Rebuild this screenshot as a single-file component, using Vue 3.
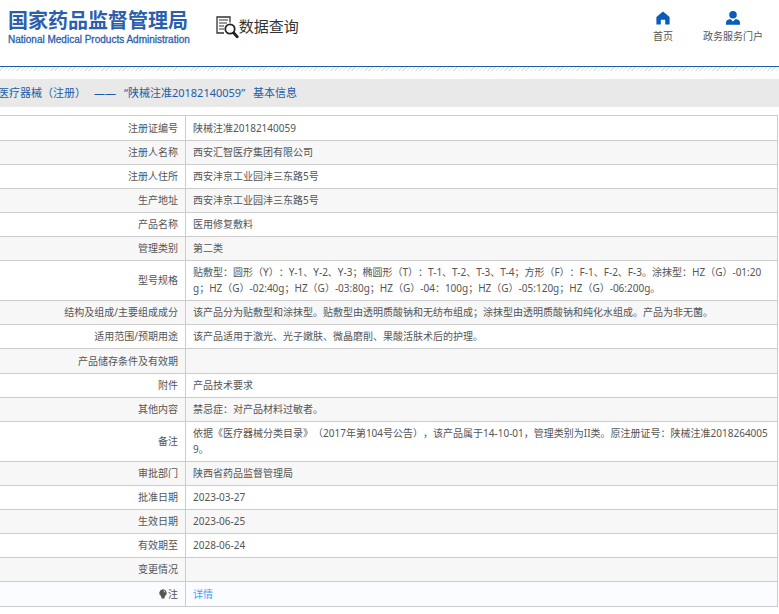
<script setup>
const rows = [
  { label: '注册证编号', value: '陕械注准20182140059', tall: true },
  { label: '注册人名称', value: '西安汇智医疗集团有限公司' },
  { label: '注册人住所', value: '西安沣京工业园沣三东路5号' },
  { label: '生产地址', value: '西安沣京工业园沣三东路5号' },
  { label: '产品名称', value: '医用修复敷料' },
  { label: '管理类别', value: '第二类' },
  { label: '型号规格', value: '贴敷型：圆形（Y）：Y-1、Y-2、Y-3；椭圆形（T）：T-1、T-2、T-3、T-4；方形（F）：F-1、F-2、F-3。涂抹型：HZ（G）-01:20g；HZ（G）-02:40g；HZ（G）-03:80g；HZ（G）-04：100g；HZ（G）-05:120g；HZ（G）-06:200g。' },
  { label: '结构及组成/主要组成成分', value: '该产品分为贴敷型和涂抹型。贴敷型由透明质酸钠和无纺布组成；涂抹型由透明质酸钠和纯化水组成。产品为非无菌。' },
  { label: '适用范围/预期用途', value: '该产品适用于激光、光子嫩肤、微晶磨削、果酸活肤术后的护理。' },
  { label: '产品储存条件及有效期', value: '', tall: true },
  { label: '附件', value: '产品技术要求' },
  { label: '其他内容', value: '禁忌症：对产品材料过敏者。' },
  { label: '备注', value: '依据《医疗器械分类目录》（2017年第104号公告），该产品属于14-10-01，管理类别为II类。原注册证号：陕械注准20182640059。' },
  { label: '审批部门', value: '陕西省药品监督管理局' },
  { label: '批准日期', value: '2023-03-27' },
  { label: '生效日期', value: '2023-06-25' },
  { label: '有效期至', value: '2028-06-24' },
  { label: '变更情况', value: '' },
]
</script>

<template>
  <div class="page">
    <header class="header">
      <a class="logo" href="#">
        <span class="logo-cn">国家药品监督管理局</span>
        <span class="logo-en">National Medical Products Administration</span>
      </a>
      <a class="query" href="#">
        <svg class="query-icon" viewBox="0 0 23 23" aria-hidden="true">
          <path d="M14 6.5V1H1v16h7" fill="none" stroke="#333" stroke-width="1.3" />
          <path d="M3 4h9M3 7h8M3 10h5M3 13h5" fill="none" stroke="#333" stroke-width="1.2" />
          <circle cx="14" cy="13" r="4.7" fill="#fff" stroke="#222" stroke-width="1.8" />
          <path d="M17.8 17l3.4 3.8" stroke="#222" stroke-width="2.8" stroke-linecap="round" />
        </svg>
        <span>数据查询</span>
      </a>
      <nav class="nav">
        <a class="nav-item" href="#">
          <svg class="nav-icon" viewBox="0 0 14 14" aria-hidden="true">
            <path d="M7 .4L.4 6V13.4H4.8V8.8h4.4v4.6h4.4V6z" fill="#0b5cb8" />
          </svg>
          <span>首页</span>
        </a>
        <a class="nav-item" href="#">
          <svg class="nav-icon" viewBox="0 0 14 14" aria-hidden="true">
            <circle cx="7" cy="3.8" r="3.8" fill="#0b5cb8" />
            <path d="M0 13.8V11.5Q.5 8.6 4.4 8.1L7 10.6 9.6 8.1Q13.5 8.6 14 11.5v2.3z" fill="#0b5cb8" />
          </svg>
          <span>政务服务门户</span>
        </a>
      </nav>
    </header>
    <div class="stripes"></div>

    <main>
      <h1 class="title">
        <span>医疗器械（注册）</span>
        <span>——</span>
        <span>“陕械注准20182140059”</span>
        <span>基本信息</span>
      </h1>
      <table class="info">
        <tbody>
          <tr v-for="row in rows" :key="row.label" :class="{ tall: row.tall }">
            <th scope="row">{{ row.label }}</th>
            <td>{{ row.value }}</td>
          </tr>
          <tr class="note tall">
            <th scope="row">
              <svg class="bulb" viewBox="0 0 8 10" aria-hidden="true">
                <path d="M4 .3a3.7 3.7 0 0 1 2 6.8L5.4 9.6H2.6L2 7.1A3.7 3.7 0 0 1 4 .3z" fill="#555" />
                <path d="M4.5 1.8q1.2.2 1.4 1.5" fill="none" stroke="#fff" stroke-width=".8" />
              </svg><span>注</span>
            </th>
            <td><a href="#">详情</a></td>
          </tr>
        </tbody>
      </table>
    </main>
  </div>
</template>

<style>
body {
  margin: 0;
  background: #fff;
}
</style>

<style scoped>
.page {
  overflow: hidden;
  font-family: "Noto Sans", "Noto Sans CJK SC", sans-serif;
  font-size: 10px;
  line-height: 16px;
  color: #555;
  text-spacing-trim: space-all;
}
a {
  color: inherit;
  text-decoration: none;
}
.header {
  display: flex;
  align-items: flex-start;
  height: 67px;
  padding: 0 16px 0 8px;
  border-bottom: 1px solid #1c5ca8;
  box-sizing: border-box;
}
.logo {
  display: flex;
  flex-direction: column;
  padding-top: 8px;
  color: #2b5fae;
  white-space: nowrap;
}
.logo-cn {
  font-family: "Noto Sans CJK SC", sans-serif;
  font-size: 20px;
  font-weight: 700;
  line-height: 24px;
}
.logo-en {
  font-family: "Liberation Sans", sans-serif;
  font-size: 10px;
  -webkit-text-stroke: 0.3px currentColor;
}
.query {
  display: flex;
  align-items: center;
  padding-top: 12px;
  margin-left: 26px;
  font-size: 15px;
  line-height: 24px;
  color: #333;
}
.query-icon {
  width: 23px;
  height: 23px;
  margin-top: 4px;
}
.nav {
  display: flex;
  gap: 30px;
  margin-left: auto;
  padding-top: 11px;
}
.nav-item {
  display: flex;
  flex-direction: column;
  align-items: center;
  gap: 3px;
}
.nav-icon {
  width: 14px;
  height: 14px;
}
.stripes {
  height: 4px;
  background: repeating-linear-gradient(135deg, #fff 0 2px, #dfe6ec 2px 3px);
}
.title {
  display: flex;
  gap: 10px;
  margin: 8px 0;
  text-indent: -2px;
  background: #e9e9e9;
  color: #1c5ca8;
  font-size: 11px;
  font-weight: 400;
  line-height: 28px;
  white-space: nowrap;
}
.info {
  width: calc(100% - 1px);
  border-collapse: collapse;
}
.info th,
.info td {
  padding: 3px 7px 4px;
  border: 1px solid #ccc;
  font-weight: 400;
  word-break: break-all;
}
.info th {
  width: 171px;
  border-left: 0;
  text-align: right;
}
.info td {
  text-align: left;
}
.info tr {
  height: 24px;
}
.info tr.tall {
  height: 25px;
}
.info tr:nth-child(even) {
  background: #f7f7f7;
}
.info tr.note {
  background: #fafcff;
}
.info a {
  color: #409eff;
}
.bulb {
  width: 8px;
  height: 10px;
  margin-right: 1px;
  vertical-align: -1px;
}
</style>
